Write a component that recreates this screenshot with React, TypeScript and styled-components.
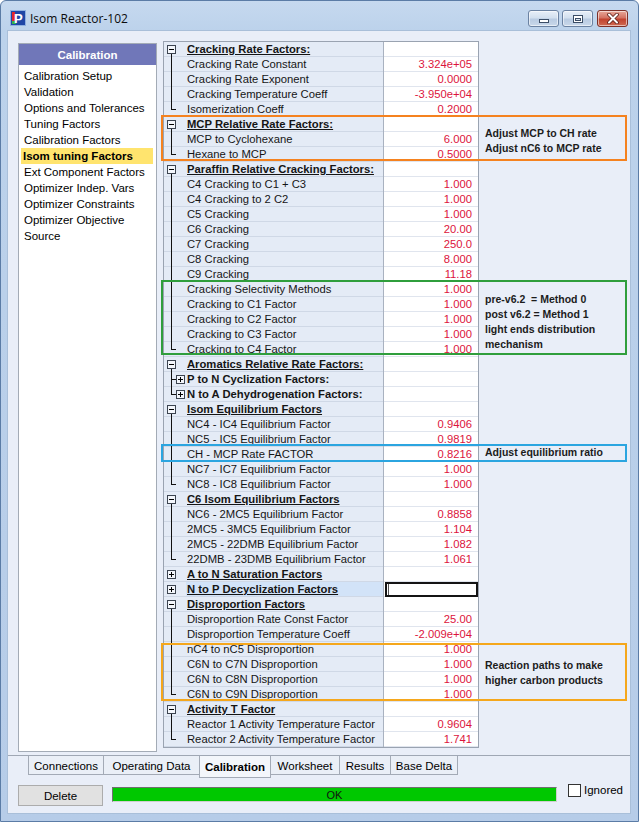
import React from "react";
import styled, { createGlobalStyle, css } from "styled-components";

const GlobalStyle = createGlobalStyle`
  html, body { margin: 0; padding: 0; }
  body {
    width: 642px; height: 822px; overflow: hidden; background: #ffffff;
    font-family: "Liberation Sans", Arial, sans-serif; color: #111;
  }
`;

type TreeKind = "open" | "closed" | "mid" | "last" | "subMid" | "subLast";
type RowKind = "group" | "sub" | "item";
interface RowDef { label: string; value?: string; kind: RowKind; tree: TreeKind; selected?: boolean; }

const g = (label: string): RowDef => ({ label, kind: "group", tree: "open" });
const gc = (label: string, selected?: boolean): RowDef => ({ label, kind: "group", tree: "closed", selected });
const it = (label: string, value: string, last?: boolean): RowDef => ({ label, value, kind: "item", tree: last ? "last" : "mid" });

const rows: RowDef[] = [
  g("Cracking Rate Factors:"),
  it("Cracking Rate Constant", "3.324e+05"),
  it("Cracking Rate Exponent", "0.0000"),
  it("Cracking Temperature Coeff", "-3.950e+04"),
  it("Isomerization Coeff", "0.2000", true),
  g("MCP Relative Rate Factors:"),
  it("MCP to Cyclohexane", "6.000"),
  it("Hexane to MCP", "0.5000", true),
  g("Paraffin Relative Cracking Factors:"),
  it("C4 Cracking to C1 + C3", "1.000"),
  it("C4 Cracking to 2 C2", "1.000"),
  it("C5 Cracking", "1.000"),
  it("C6 Cracking", "20.00"),
  it("C7 Cracking", "250.0"),
  it("C8 Cracking", "8.000"),
  it("C9 Cracking", "11.18"),
  it("Cracking Selectivity Methods", "1.000"),
  it("Cracking to C1 Factor", "1.000"),
  it("Cracking to C2 Factor", "1.000"),
  it("Cracking to C3 Factor", "1.000"),
  it("Cracking to C4 Factor", "1.000", true),
  g("Aromatics Relative Rate Factors:"),
  { label: "P to N Cyclization Factors:", kind: "sub", tree: "subMid" },
  { label: "N to A Dehydrogenation Factors:", kind: "sub", tree: "subLast" },
  g("Isom Equilibrium Factors"),
  it("NC4 - IC4 Equilibrium Factor", "0.9406"),
  it("NC5 - IC5 Equilibrium Factor", "0.9819"),
  it("CH - MCP Rate FACTOR", "0.8216"),
  it("NC7 - IC7 Equilibrium Factor", "1.000"),
  it("NC8 - IC8 Equilibrium Factor", "1.000", true),
  g("C6 Isom Equilibrium Factors"),
  it("NC6 - 2MC5 Equilibrium Factor", "0.8858"),
  it("2MC5 - 3MC5 Equilibrium Factor", "1.104"),
  it("2MC5 - 22DMB Equilibrium Factor", "1.082"),
  it("22DMB - 23DMB Equilibrium Factor", "1.061", true),
  gc("A to N Saturation Factors"),
  gc("N to P Decyclization Factors", true),
  g("Disproportion Factors"),
  it("Disproportion Rate Const Factor", "25.00"),
  it("Disproportion Temperature Coeff", "-2.009e+04"),
  it("nC4 to nC5 Disproportion", "1.000"),
  it("C6N to C7N Disproportion", "1.000"),
  it("C6N to C8N Disproportion", "1.000"),
  it("C6N to C9N Disproportion", "1.000", true),
  g("Activity T Factor"),
  it("Reactor 1 Activity Temperature Factor", "0.9604"),
  it("Reactor 2 Activity Temperature Factor", "1.741", true),
];

const navItems = [
  "Calibration Setup", "Validation", "Options and Tolerances", "Tuning Factors",
  "Calibration Factors", "Isom tuning Factors", "Ext Component Factors",
  "Optimizer Indep. Vars", "Optimizer Constraints", "Optimizer Objective", "Source",
];

const tabs = [
  { name: "Connections", width: 76 },
  { name: "Operating Data", width: 97 },
  { name: "Calibration", width: 72, active: true },
  { name: "Worksheet", width: 70 },
  { name: "Results", width: 52 },
  { name: "Base Delta", width: 68 },
];

const notes = [
  { color: "#f5821f", top: 74, height: 46, pad: 9, text: "Adjust MCP to CH rate\nAdjust nC6 to MCP rate" },
  { color: "#2f9e3c", top: 239, height: 75, pad: 10, text: "pre-v6.2  = Method 0\npost v6.2 = Method 1\nlight ends distribution\nmechanism" },
  { color: "#2ba5e0", top: 403, height: 18, pad: 0, text: "Adjust equilibrium ratio", lh: 13 },
  { color: "#f5a71c", top: 602, height: 58, pad: 13, text: "Reaction paths to make\nhigher carbon products" },
];

/* ---------- window chrome ---------- */
const Window = styled.div`
  width: 639px; height: 822px; box-sizing: border-box;
  border: 1px solid #5b7ca6; border-radius: 6px 6px 0 0;
  background: linear-gradient(#c6d9ef 0px, #bcd2eb 30px, #b6cce8 100%);
  display: flex; flex-direction: column;
  padding: 0 8px 8px 7px;
`;

const TitleBar = styled.div`
  height: 30px; flex: none; box-sizing: border-box;
  display: flex; align-items: flex-start;
  padding: 9px 2px 0 2px;
`;

const AppIcon = styled.svg`
  flex: none; margin-top: 0px;
`;

const Title = styled.div`
  margin-left: 4px; font: 12px/17px "Open Sans", "Liberation Sans", sans-serif; color: #0c0c0c;
  flex: 1;
`;

const WinButton = styled.div<{ $close?: boolean; $gap?: number }>`
  width: 31px; height: 17px; box-sizing: border-box; flex: none;
  margin-left: ${(p) => p.$gap ?? 0}px;
  border-radius: 3px;
  display: flex; align-items: center; justify-content: center;
  ${(p) =>
    p.$close
      ? css`
          border: 1px solid #7d3028;
          background: linear-gradient(#e8a899 0%, #d47363 45%, #c2432f 55%, #cf6a52 100%);
        `
      : css`
          border: 1px solid #6b82a2;
          background: linear-gradient(#e8eff8 0%, #d3e0ef 45%, #b9cbe2 55%, #c9d8ea 100%);
        `}
  box-shadow: inset 0 0 0 1px rgba(255, 255, 255, 0.55);
`;

const Client = styled.div`
  flex: 1; display: flex; flex-direction: column;
  background: #e9eef8;
  box-shadow: 0 0 0 1px #a9bfd9;
`;

/* ---------- main area ---------- */
const MainRow = styled.div`
  height: 724px; flex: none; box-sizing: border-box;
  display: flex; align-items: flex-start;
  padding: 10px 0 0 10px;
`;

const NavPanel = styled.div`
  width: 139px; height: 709px; box-sizing: border-box; flex: none;
  margin-top: 2px;
  border: 1px solid #a3abb6; background: #ffffff;
`;

const NavHeader = styled.div`
  height: 21px; background: #7077b9; color: #ffffff;
  display: flex; align-items: center; justify-content: center;
  font: bold 11.5px "Liberation Sans", Arial, sans-serif;
`;

const NavList = styled.div`
  padding: 3px 3px 0 2px;
`;

const NavItem = styled.div<{ $active?: boolean }>`
  height: 16px; line-height: 16px; padding-left: 3px;
  font-size: 11.5px; color: #000; white-space: nowrap;
  ${(p) => p.$active && css`background: #ffe46e; font-weight: bold; padding-left: 2px;`}
`;

const Sheet = styled.div`
  position: relative; margin-left: 6px; flex: none;
`;

const Table = styled.div`
  width: 316px; box-sizing: border-box;
  border: 1px solid #9aa3b1; background: #fff;
  display: flex; flex-direction: column;
`;

const Row = styled.div`
  display: flex; height: 15px;
`;

const Gutter = styled.div`
  width: 22px; flex: none; background: #e4ebf6;
  box-shadow: inset 0 -1px 0 #cfd8e6;
  display: flex;
`;

const LabelCell = styled.div<{ $kind: RowKind; $selected?: boolean }>`
  width: 197px; flex: none; box-sizing: border-box; padding-left: 1px;
  background: ${(p) => (p.$selected ? "#d2e3f8" : "#e4ebf6")};
  box-shadow: inset 0 -1px 0 #cfd8e6;
  font-size: 11.25px; line-height: 14px; color: #151515;
  white-space: nowrap; overflow: hidden;
  ${(p) => p.$kind !== "item" && css`font-weight: bold;`}
  ${(p) => p.$kind === "group" && css`text-decoration: underline; text-underline-offset: 1px;`}
`;

const ValueCell = styled.div`
  width: 95px; flex: none; box-sizing: border-box;
  border-left: 1px solid #a9b2c0;
  box-shadow: inset 0 -1px 0 #e0e5ee;
  padding-right: 6px; text-align: right;
  font-size: 11.25px; line-height: 14px; color: #dc143c;
  display: flex; justify-content: flex-end;
`;

const SelectedBox = styled.div`
  flex: 1; margin-left: 1px; height: 15px; box-sizing: border-box;
  margin-right: -6px;
  border: 2px solid #141414; background: #fff;
  display: flex; align-items: center; padding-left: 1px;
`;

const Caret = styled.div`
  width: 1px; height: 11px; background: #555;
`;

const Note = styled.div<{ $color: string; $top: number; $height: number; $pad: number; $lh?: number }>`
  position: absolute; left: -2px; width: 466px; box-sizing: border-box;
  top: ${(p) => p.$top}px; height: ${(p) => p.$height}px;
  border: 2px solid ${(p) => p.$color};
  padding: ${(p) => p.$pad}px 0 0 322px;
  font: bold 10.5px/${(p) => p.$lh ?? 15}px "Liberation Sans", Arial, sans-serif;
  color: #1c1c1c; white-space: pre; pointer-events: none;
`;

/* ---------- tabs & status ---------- */
const TabStrip = styled.div`
  height: 30px; flex: none; box-sizing: border-box;
  border-top: 1px solid #9fa7b4;
  display: flex; align-items: flex-start;
  padding-left: 20px;
`;

const Tab = styled.div<{ $w: number; $active?: boolean }>`
  width: ${(p) => p.$w}px; box-sizing: border-box; flex: none;
  height: ${(p) => (p.$active ? 22 : 19)}px;
  margin-left: -1px;
  border: 1px solid #a3aab6; border-top: none;
  background: ${(p) => (p.$active ? "#f3f6fb" : "#eaeff7")};
  display: flex; align-items: center; justify-content: center;
  padding-top: 2px;
  padding-bottom: ${(p) => (p.$active ? 2 : 0)}px;
  font-size: 11.5px; color: #000; white-space: nowrap;
  ${(p) => p.$active && css`font-weight: bold;`}
  &:first-child { margin-left: 0; }
`;

const StatusBar = styled.div`
  display: flex; align-items: flex-start; padding-left: 10px;
`;

const DeleteButton = styled.div`
  width: 85px; height: 21px; box-sizing: border-box; flex: none;
  border: 1px solid #acacac; background: #e1e1e1;
  display: flex; align-items: center; justify-content: center;
  font-size: 11.5px; color: #000;
`;

const StatusMeter = styled.div`
  width: 445px; height: 15px; box-sizing: border-box; flex: none;
  margin: 2px 0 0 9px;
  border: 1px solid #6f6f6f; border-right-color: #cfcfcf; border-bottom-color: #cfcfcf;
  background: #00c800;
  display: flex; align-items: center; justify-content: center;
  font-size: 11px; color: #111;
`;

const CheckBox = styled.div`
  width: 13px; height: 13px; box-sizing: border-box; flex: none;
  margin: -1px 0 0 11px;
  border: 1px solid #333; background: #fff;
`;

const CheckLabel = styled.div`
  margin: -2px 0 0 3px; font-size: 11.5px; line-height: 15px; color: #000;
`;

/* ---------- drawings ---------- */
const TreeGlyph: React.FC<{ kind: TreeKind }> = ({ kind }) => {
  const stroke = "#111";
  const box = (x: number, plus: boolean) => (
    <g>
      <rect x={x + 0.5} y={3.5} width={8} height={8} fill="#f3f6fb" stroke="#3c4450" />
      <path d={`M${x + 2} 7.5H${x + 7}`} stroke="#000" />
      {plus && <path d={`M${x + 4.5} 5V10`} stroke="#000" />}
    </g>
  );
  return (
    <svg width="22" height="15" viewBox="0 0 22 15" shapeRendering="crispEdges">
      {kind === "open" && (
        <>
          <path d="M7.5 12V15" stroke={stroke} />
          {box(3, false)}
        </>
      )}
      {kind === "closed" && box(3, true)}
      {kind === "mid" && <path d="M7.5 0V15" stroke={stroke} />}
      {kind === "last" && <path d="M7.5 0V8M7 7.5H12" stroke={stroke} />}
      {kind === "subMid" && (
        <>
          <path d="M7.5 0V15M7 7.5H12" stroke={stroke} />
          {box(12, true)}
        </>
      )}
      {kind === "subLast" && (
        <>
          <path d="M7.5 0V8M7 7.5H12" stroke={stroke} />
          {box(12, true)}
        </>
      )}
    </svg>
  );
};

const LogoIcon = () => (
  <AppIcon width="16" height="16" viewBox="0 0 16 16">
    <rect x="0.5" y="0.5" width="15" height="15" fill="#1f46a6" stroke="#8fb0e0" />
    <rect x="2" y="2" width="3" height="9" fill="#e3262b" />
    <rect x="2" y="11" width="4" height="3" fill="#37b34a" />
    <text x="4" y="13" fontFamily="Liberation Sans, Arial, sans-serif" fontWeight="bold" fontSize="13" fill="#ffffff">P</text>
  </AppIcon>
);

const MinGlyph = () => (
  <svg width="12" height="10" viewBox="0 0 12 10" shapeRendering="crispEdges">
    <rect x="1.5" y="5.5" width="9" height="3" fill="#ffffff" stroke="#3b4d66" />
  </svg>
);

const RestoreGlyph = () => (
  <svg width="12" height="10" viewBox="0 0 12 10" shapeRendering="crispEdges">
    <rect x="1.5" y="1.5" width="9" height="7" fill="#ffffff" stroke="#3b4d66" />
    <rect x="3.5" y="4.5" width="5" height="2" fill="#d9e3ef" stroke="#3b4d66" />
  </svg>
);

const CloseGlyph = () => (
  <svg width="14" height="11" viewBox="0 0 14 11">
    <path d="M3 1.5L11 9.5M11 1.5L3 9.5" stroke="#5a1e17" strokeWidth="3.6" strokeLinecap="round" />
    <path d="M3 1.5L11 9.5M11 1.5L3 9.5" stroke="#ffffff" strokeWidth="2" strokeLinecap="round" />
  </svg>
);

export default function App() {
  return (
    <>
      <GlobalStyle />
      <Window>
        <TitleBar>
          <LogoIcon />
          <Title>Isom Reactor-102</Title>
          <WinButton><MinGlyph /></WinButton>
          <WinButton $gap={3}><RestoreGlyph /></WinButton>
          <WinButton $gap={4} $close><CloseGlyph /></WinButton>
        </TitleBar>
        <Client>
          <MainRow>
            <NavPanel>
              <NavHeader>Calibration</NavHeader>
              <NavList>
                {navItems.map((n) => (
                  <NavItem key={n} $active={n === "Isom tuning Factors"}>{n}</NavItem>
                ))}
              </NavList>
            </NavPanel>
            <Sheet>
              <Table>
                {rows.map((r, i) => (
                  <Row key={i}>
                    <Gutter><TreeGlyph kind={r.tree} /></Gutter>
                    <LabelCell $kind={r.kind} $selected={r.selected}>{r.label}</LabelCell>
                    <ValueCell>
                      {r.selected ? (
                        <SelectedBox><Caret /></SelectedBox>
                      ) : (
                        r.value
                      )}
                    </ValueCell>
                  </Row>
                ))}
              </Table>
              {notes.map((n, i) => (
                <Note key={i} $color={n.color} $top={n.top} $height={n.height} $pad={n.pad} $lh={n.lh}>
                  {n.text}
                </Note>
              ))}
            </Sheet>
          </MainRow>
          <TabStrip>
            {tabs.map((t) => (
              <Tab key={t.name} $w={t.width} $active={t.active}>{t.name}</Tab>
            ))}
          </TabStrip>
          <StatusBar>
            <DeleteButton>Delete</DeleteButton>
            <StatusMeter>OK</StatusMeter>
            <CheckBox />
            <CheckLabel>Ignored</CheckLabel>
          </StatusBar>
        </Client>
      </Window>
    </>
  );
}
